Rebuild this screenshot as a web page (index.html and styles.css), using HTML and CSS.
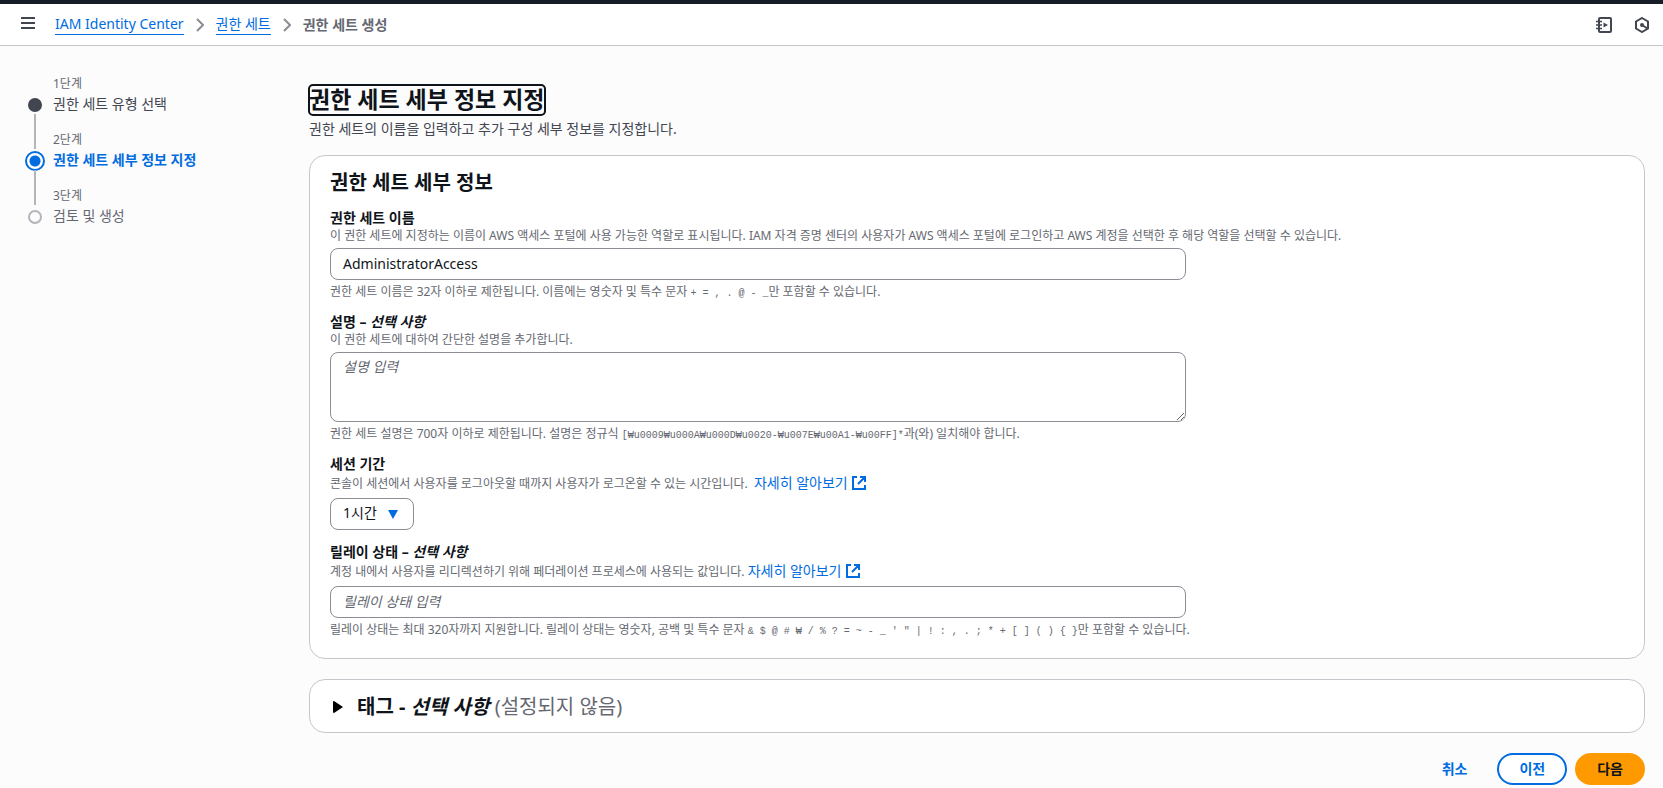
FILE: index.html
```html
<!DOCTYPE html>
<html lang="ko">
  <head>
    <meta charset="UTF-8">
    <title>권한 세트 생성</title>
    <link rel="stylesheet" href="styles.css">
  </head>
  <body>
    <header class="topbar">
      <button class="icon-button menu" aria-label="메뉴">
        <svg width="14" height="14" viewBox="0 0 14 14"><path d="M0 2h14M0 7h14M0 12h14" /></svg>
      </button>
      <nav class="breadcrumbs">
        <a href="#">IAM Identity Center</a>
        <svg width="8" height="14" viewBox="0 0 8 14"><path d="M1 1l6 6-6 6" /></svg>
        <a href="#">권한 세트</a>
        <svg width="8" height="14" viewBox="0 0 8 14"><path d="M1 1l6 6-6 6" /></svg>
        <span class="current">권한 세트 생성</span>
      </nav>
      <div class="tools">
        <button class="icon-button" aria-label="자습서">
          <svg width="16" height="16" viewBox="0 0 16 16">
            <rect x="3" y="1" width="12" height="14" rx="1" />
            <path class="thin" d="M0 4.500h6M0 8h6M0 11.500h6" />
            <path class="solid" d="M7.500 5.500l4.500 2.500-4.500 2.500z" />
          </svg>
        </button>
        <button class="icon-button" aria-label="도움말">
          <svg width="16" height="16" viewBox="0 0 16 16">
            <path d="M8 1l6 3.500v7L8 15l-6-3.500v-7zM8 8l5.500 3.500" />
            <circle class="solid" cx="8" cy="8" r="2" />
          </svg>
        </button>
      </div>
    </header>

    <div class="layout">
      <nav class="steps">
        <ol>
          <li class="done">
            <span class="step-number">1단계</span>
            <span class="marker"></span>
            <span class="step-name">권한 세트 유형 선택</span>
          </li>
          <li class="active">
            <span class="step-number">2단계</span>
            <span class="marker"></span>
            <span class="step-name">권한 세트 세부 정보 지정</span>
          </li>
          <li>
            <span class="step-number">3단계</span>
            <span class="marker"></span>
            <span class="step-name">검토 및 생성</span>
          </li>
        </ol>
      </nav>

      <main>
        <h1>권한 세트 세부 정보 지정</h1>
        <p class="intro">권한 세트의 이름을 입력하고 추가 구성 세부 정보를 지정합니다.</p>

        <form>
          <section class="card details">
            <h2>권한 세트 세부 정보</h2>

            <div class="field">
              <label for="name">권한 세트 이름</label>
              <p class="hint">이 권한 세트에 지정하는 이름이 AWS 액세스 포털에 사용 가능한 역할로 표시됩니다. IAM 자격 증명 센터의 사용자가 AWS 액세스 포털에 로그인하고 AWS 계정을 선택한 후 해당 역할을 선택할 수 있습니다.</p>
              <input class="control" id="name" type="text" value="AdministratorAccess">
              <p class="constraint">권한 세트 이름은 32자 이하로 제한됩니다. 이름에는 영숫자 및 특수 문자 <code>+ = , . @ - _</code>만 포함할 수 있습니다.</p>
            </div>

            <div class="field">
              <label for="description">설명 – <i>선택 사항</i></label>
              <p class="hint">이 권한 세트에 대하여 간단한 설명을 추가합니다.</p>
              <textarea class="control" id="description" placeholder="설명 입력"></textarea>
              <p class="constraint">권한 세트 설명은 700자 이하로 제한됩니다. 설명은 정규식 <code>[₩u0009₩u000A₩u000D₩u0020-₩u007E₩u00A1-₩u00FF]*</code>과(와) 일치해야 합니다.</p>
            </div>

            <div class="field">
              <label for="duration">세션 기간</label>
              <p class="hint with-link">콘솔이 세션에서 사용자를 로그아웃할 때까지 사용자가 로그온할 수 있는 시간입니다.&nbsp; <a href="#">자세히 알아보기 <svg width="14" height="14" viewBox="0 0 14 14"><path d="M5 1H1v12h12V9M8 1h5v5M13 1L6 8" /></svg></a></p>
              <div class="select">
                <select class="control" id="duration">
                  <option>1시간</option>
                </select>
                <svg width="10" height="9" viewBox="0 0 10 9"><path d="M0 0h10L5 9z" /></svg>
              </div>
            </div>

            <div class="field">
              <label for="relay">릴레이 상태 – <i>선택 사항</i></label>
              <p class="hint with-link">계정 내에서 사용자를 리디렉션하기 위해 페더레이션 프로세스에 사용되는 값입니다. <a href="#">자세히 알아보기 <svg width="14" height="14" viewBox="0 0 14 14"><path d="M5 1H1v12h12V9M8 1h5v5M13 1L6 8" /></svg></a></p>
              <input class="control" id="relay" type="text" placeholder="릴레이 상태 입력">
              <p class="constraint">릴레이 상태는 최대 320자까지 지원합니다. 릴레이 상태는 영숫자, 공백 및 특수 문자 <code>&amp; $ @ # ₩ / % ? = ~ - _ ' " | ! : , . ; * + [ ] ( ) { }</code>만 포함할 수 있습니다.</p>
            </div>
          </section>

          <details class="card tags">
            <summary>
              <svg width="10" height="12" viewBox="0 0 10 12"><path d="M0 1Q0 0 1 0L10 6 1 12Q0 12 0 11z" /></svg>
              <span><b>태그 - <i>선택 사항</i></b> <span class="empty">(설정되지 않음)</span></span>
            </summary>
          </details>

          <div class="actions">
            <button class="button link" type="button">취소</button>
            <button class="button" type="button">이전</button>
            <button class="button primary" type="button">다음</button>
          </div>
        </form>
      </main>
    </div>
  </body>
</html>
```

FILE: styles.css
```css
* {
  box-sizing: border-box;
}

body {
  margin: 0;
  background: #fcfcfd;
  color: #0f141a;
  font: 14px/20px "Noto Sans", "Noto Sans CJK KR", sans-serif;
}

h1, h2, p, ol {
  margin: 0;
}

a {
  color: #006ce0;
}

button, input, select, textarea {
  font: inherit;
}

/* Top bar */
.topbar {
  display: flex;
  align-items: center;
  height: 46px;
  padding: 0 13px 0 20px;
  border-top: 4px solid #161d26;
  border-bottom: 1px solid #c6c6cd;
  background: #fff;
}
.icon-button {
  display: flex;
  padding: 0;
  border: 0;
  background: none;
  cursor: pointer;
}
.icon-button svg {
  fill: none;
  stroke: #424650;
  stroke-width: 2;
}
.icon-button .thin {
  stroke-width: 1.5;
}
.icon-button .solid {
  fill: #424650;
  stroke: none;
}
.menu {
  padding: 0 20px 4px 1px;
}
.breadcrumbs {
  display: flex;
  align-items: center;
  gap: 12px;
  flex-grow: 1;
}
.breadcrumbs a {
  border-bottom: 1px solid #006ce0;
  line-height: 20px;
  text-decoration: none;
}
.breadcrumbs svg {
  fill: none;
  stroke: #8c8c94;
  stroke-width: 2;
}
.current {
  color: #656871;
  font-weight: bold;
}
.tools {
  display: flex;
  gap: 22px;
}

/* Wizard layout */
.layout {
  display: grid;
  grid-template-columns: 269px 1fr;
  gap: 40px;
  padding: 28px 18px 0 0;
}
.steps ol {
  padding: 0 0 0 24px;
  list-style: none;
}
.steps li {
  display: grid;
  grid-template-columns: 22px 1fr;
  grid-template-rows: 20px 20px 16px;
  column-gap: 7px;
  color: #656871;
}
.steps li:not(:last-child)::after {
  content: "";
  grid-column: 1;
  grid-row: 3;
  justify-self: center;
  width: 2px;
  height: 35px;
  background: #b4b4bb;
}
.step-number {
  grid-column: 2;
  font-size: 12px;
}
.marker {
  grid-column: 1;
  place-self: center;
  width: 14px;
  height: 14px;
  margin-top: 2px;
  border: 2px solid #b4b4bb;
  border-radius: 50%;
}
.step-name {
  grid-column: 2;
}
.done .marker {
  border-color: #424650;
  background: #424650;
}
.done .step-name {
  color: #424650;
}
.active .marker {
  width: 20px;
  height: 20px;
  border-color: #006ce0;
  background: radial-gradient(#006ce0 5px, #fff 6px);
}
.active .step-name {
  color: #006ce0;
  font-weight: bold;
}

/* Main column */
h1 {
  width: fit-content;
  margin-top: 11px;
  border-radius: 4px;
  outline: 2px solid #0f141a;
  outline-offset: -1px;
  font-size: 23px;
  line-height: 28px;
  padding-bottom: 2px;
}
.intro {
  margin: 4px 0 16px;
  color: #424650;
}
.card {
  border: 1px solid #c6c6cd;
  border-radius: 16px;
  background: #fff;
}
.details {
  display: flex;
  flex-direction: column;
  gap: 12px;
  padding: 14px 20px 20px;
}
h2 {
  font-size: 20px;
  line-height: 26px;
}
.field {
  display: grid;
  grid-template-columns: repeat(3, 1fr);
  column-gap: 20px;
}
.field > * {
  grid-column: 1 / -1;
}
.field > .control {
  grid-column: span 2;
}
.field label {
  font-weight: bold;
}
.hint, .constraint {
  color: #656871;
  font-size: 12px;
  line-height: 16px;
}
.hint {
  margin-bottom: 4px;
}
.constraint {
  margin-top: 4px;
}
.with-link {
  line-height: 20px;
}
.with-link a {
  font-size: 14px;
  line-height: 16px;
  text-decoration: none;
}
.with-link svg {
  margin-left: 1px;
  vertical-align: -2px;
  fill: none;
  stroke: #006ce0;
  stroke-width: 2;
}
code {
  font: 10px/12px "Liberation Mono", monospace;
}
.control {
  height: 32px;
  padding: 3px 12px 5px;
  border: 1px solid #8c8c94;
  border-radius: 8px;
  background: #fff;
  color: #0f141a;
}
textarea.control {
  display: block;
  height: 70px;
  padding-top: 4px;
  resize: both;
}
.control::placeholder {
  color: #656871;
  font-style: italic;
}
.select {
  position: relative;
  justify-self: start;
}
.select .control {
  display: block;
  padding-right: 36px;
  appearance: none;
}
.select svg {
  position: absolute;
  top: 12px;
  right: 16px;
  fill: #006ce0;
  pointer-events: none;
}

/* Tags */
.tags {
  margin-top: 20px;
}
.tags summary {
  display: flex;
  align-items: center;
  gap: 14px;
  padding: 13px 23px 11px;
  font-size: 20px;
  line-height: 28px;
  list-style: none;
}
.empty {
  color: #656871;
}

/* Footer buttons */
.actions {
  display: flex;
  justify-content: flex-end;
  gap: 8px;
  margin-top: 20px;
}
.button {
  height: 32px;
  padding: 0 20px;
  border: 2px solid #006ce0;
  border-radius: 16px;
  background: #fff;
  color: #006ce0;
  font-weight: bold;
}
.button.link {
  border-color: transparent;
  background: none;
}
.button.primary {
  border-color: #ff9900;
  background: #ff9900;
  color: #0f141a;
}
```
